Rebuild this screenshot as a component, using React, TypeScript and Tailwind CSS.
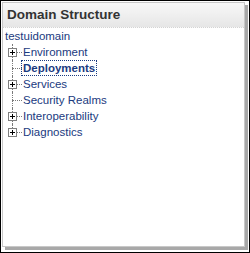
const items = [
  { label: 'Environment', plus: true },
  { label: 'Deployments', plus: false, active: true },
  { label: 'Services', plus: true },
  { label: 'Security Realms', plus: false },
  { label: 'Interoperability', plus: true },
  { label: 'Diagnostics', plus: true },
];

function PlusBox() {
  return (
    <svg width="9" height="9" viewBox="0 0 9 9" className="block">
      <rect x="0.5" y="0.5" width="8" height="8" fill="#fff" stroke="#808080" />
      <path d="M2 4.5h5M4.5 2v5" stroke="#000" />
    </svg>
  );
}

function TreeRow({ label, plus, active, last }: { label: string; plus: boolean; active?: boolean; last: boolean }) {
  return (
    <div className="relative flex h-4 items-center">
      {/* vertical connector */}
      <div
        className={`absolute left-[4px] top-0 w-0 border-l border-dotted border-[#7a7a7a] ${last ? 'h-2' : 'h-4'}`}
      />
      <div className="relative flex w-[14px] shrink-0 items-center">
        {plus ? (
          <>
            <div className="bg-white">
              <PlusBox />
            </div>
            <div className="w-[5px] border-t border-dotted border-[#7a7a7a]" />
          </>
        ) : (
          <div className="ml-[4px] w-[10px] border-t border-dotted border-[#7a7a7a]" />
        )}
      </div>
      <span
        className={`whitespace-nowrap px-[1px] leading-[14px] text-[#1a3a80] ${
          active ? 'font-bold outline-1 outline-dotted outline-[#1a3a80]' : ''
        }`}
      >
        {label}
      </span>
    </div>
  );
}

export default function App() {
  return (
    <div className="h-[253px] w-[250px] border border-black bg-white font-['Liberation_Sans',Arial,sans-serif]">
      <div className="ml-[1px] mt-[1px] h-[245px] w-[243px] border border-[#c8c8c8] bg-white shadow-[3px_3px_0_#a8a8a8]">
        <div className="flex h-[25px] items-center border-b border-dotted border-[#d4d4d4] bg-gradient-to-b from-[#f8f8f8] to-[#e6e6e6] px-[4px] text-[13.5px] font-bold text-[#333]">
          Domain Structure
        </div>
        <div className="px-[2px] text-[11.5px]">
          <div className="h-4 leading-4 text-[#1a3a80]">testuidomain</div>
          <div className="pl-[3px]">
            {items.map((it, i) => (
              <TreeRow key={it.label} {...it} last={i === items.length - 1} />
            ))}
          </div>
        </div>
      </div>
    </div>
  );
}
